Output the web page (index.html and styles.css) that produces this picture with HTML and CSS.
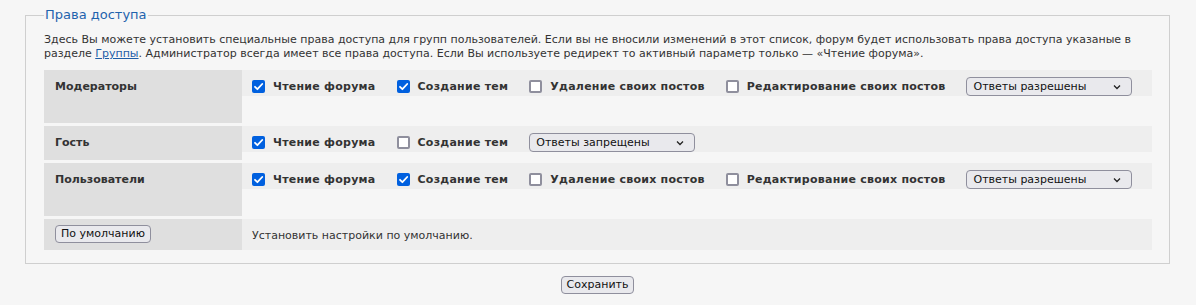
FILE: index.html
```html
<!DOCTYPE html>
<html lang="ru">
<head>
<meta charset="utf-8">
<title>Права доступа</title>
<link rel="stylesheet" href="styles.css">
</head>
<body>
<form class="page">
  <fieldset class="perm">
    <legend class="perm-legend">Права доступа</legend>
    <p class="desc">Здесь Вы можете установить специальные права доступа для групп пользователей. Если вы не вносили изменений в этот список, форум будет использовать права доступа указаные в разделе <a href="#" class="link">Группы</a>. Администратор всегда имеет все права доступа. Если Вы используете редирект то активный параметр только — «Чтение форума».</p>
    <div class="table">
      <div class="row tall">
        <div class="cell-head">Модераторы</div>
        <div class="cell-body">
          <label class="opt"><input type="checkbox" class="cb" checked><span>Чтение форума</span></label>
          <label class="opt"><input type="checkbox" class="cb" checked><span>Создание тем</span></label>
          <label class="opt"><input type="checkbox" class="cb"><span>Удаление своих постов</span></label>
          <label class="opt"><input type="checkbox" class="cb"><span>Редактирование своих постов</span></label>
          <select class="sel"><option>Ответы разрешены</option><option>Ответы запрещены</option></select>
        </div>
      </div>
      <div class="row">
        <div class="cell-head">Гость</div>
        <div class="cell-body">
          <label class="opt"><input type="checkbox" class="cb" checked><span>Чтение форума</span></label>
          <label class="opt"><input type="checkbox" class="cb"><span>Создание тем</span></label>
          <select class="sel"><option>Ответы запрещены</option><option>Ответы разрешены</option></select>
        </div>
      </div>
      <div class="row tall">
        <div class="cell-head">Пользователи</div>
        <div class="cell-body">
          <label class="opt"><input type="checkbox" class="cb" checked><span>Чтение форума</span></label>
          <label class="opt"><input type="checkbox" class="cb" checked><span>Создание тем</span></label>
          <label class="opt"><input type="checkbox" class="cb"><span>Удаление своих постов</span></label>
          <label class="opt"><input type="checkbox" class="cb"><span>Редактирование своих постов</span></label>
          <select class="sel"><option>Ответы разрешены</option><option>Ответы запрещены</option></select>
        </div>
      </div>
      <div class="row last">
        <div class="cell-head"><button type="button" class="btn">По умолчанию</button></div>
        <div class="cell-body plain">Установить настройки по умолчанию.</div>
      </div>
    </div>
  </fieldset>
  <div class="actions"><button type="button" class="btn">Сохранить</button></div>
</form>
</body>
</html>
```

FILE: styles.css
```css
html, body {
  margin: 0;
  padding: 0;
  background: #f6f6f6;
}
body {
  font-family: "DejaVu Sans", Verdana, sans-serif;
  font-size: 11px;
  color: #333333;
}
.page {
  padding: 7px 26px 0 25px;
}
.perm {
  margin: 0;
  border: 1px solid #cfcfcf;
  padding: 0 17px 13px 18px;
}
.perm-legend {
  color: #1f63ad;
  font-size: 13px;
  padding: 0 1px;
  margin-left: 0;
  line-height: 16px;
}
.desc {
  margin: 10px 0 9px 0;
  line-height: 14px;
  color: #333;
}
.link {
  color: #1f5da6;
  text-decoration: underline;
}
.table {
  display: flex;
  flex-direction: column;
  gap: 3px;
}
.row {
  display: grid;
  grid-template-columns: 198px 1fr;
  min-height: 34px;
}
.row.tall {
  min-height: 53px;
}
.row.last {
  min-height: 31px;
}
.cell-head {
  background: #dfdfdf;
  padding: 10px 11px 0;
  font-weight: bold;
  line-height: 13px;
}
.row.last .cell-head {
  padding: 6px 11px 0;
  font-weight: normal;
}
.cell-body {
  background: #eeeeee;
  padding: 7px 10px 0;
  display: flex;
  align-items: flex-start;
  gap: 21px;
  height: 19px;
  box-sizing: content-box;
}
.cell-body.plain {
  padding-top: 10px;
  line-height: 13px;
  height: auto;
}
.opt {
  display: flex;
  align-items: center;
  gap: 8px;
  height: 19px;
  font-weight: bold;
  letter-spacing: 0.25px;
  white-space: nowrap;
}
.cb {
  appearance: none;
  -webkit-appearance: none;
  margin: 0;
  width: 13px;
  height: 13px;
  box-sizing: border-box;
  border: 2px solid #8f8f9d;
  border-radius: 2px;
  background: #ffffff;
}
.cb:checked {
  border: none;
  background: #0060df url("data:image/svg+xml,%3Csvg xmlns='http://www.w3.org/2000/svg' viewBox='0 0 13 13'%3E%3Cpath d='M3 6.8l2.4 2.4L10.2 4' fill='none' stroke='white' stroke-width='1.8' stroke-linecap='round' stroke-linejoin='round'/%3E%3C/svg%3E") center/13px 13px no-repeat;
}
.sel {
  appearance: none;
  -webkit-appearance: none;
  margin: 0;
  width: 166px;
  height: 19px;
  box-sizing: border-box;
  border: 1px solid #8f8f9d;
  border-radius: 4px;
  background: #e9e9ed url("data:image/svg+xml,%3Csvg xmlns='http://www.w3.org/2000/svg' viewBox='0 0 8 6'%3E%3Cpath d='M1 1.5l3 3 3-3' fill='none' stroke='%23222' stroke-width='1.3'/%3E%3C/svg%3E") right 10px center/8px 6px no-repeat;
  font-family: "DejaVu Sans", Verdana, sans-serif;
  font-size: 11px;
  color: #111;
  padding: 0 20px 0 6px;
  line-height: 17px;
}
.btn {
  margin: 0;
  font-family: "DejaVu Sans", Verdana, sans-serif;
  font-size: 11px;
  color: #111;
  background: #e9e9ed;
  border: 1px solid #8f8f9d;
  border-radius: 4px;
  height: 18px;
  padding: 0 5px;
  line-height: 16px;
}
.actions {
  display: flex;
  justify-content: center;
  padding-top: 12px;
}
```
